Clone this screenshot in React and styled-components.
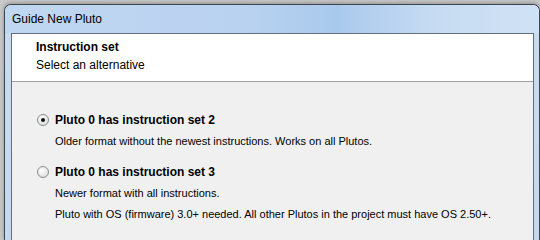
import React, { useState } from "react";
import styled, { createGlobalStyle } from "styled-components";

const GlobalStyle = createGlobalStyle`
  html, body {
    margin: 0;
    padding: 0;
    height: 100%;
    background: #c9c9c9;
    overflow: hidden;
  }
`;

const Window = styled.div`
  box-sizing: border-box;
  width: 536px;
  height: calc(100vh - 4px);
  margin: 4px 0 0 4px;
  border: 1px solid #3c4650;
  border-bottom: none;
  border-radius: 7px 7px 0 0;
  background: #c4d8ef;
  box-shadow: 0 -1px 4px rgba(0, 0, 0, 0.3);
  display: flex;
  flex-direction: column;
  font-family: "Liberation Sans", Arial, sans-serif;
`;

const TitleBar = styled.div`
  height: 28px;
  flex-shrink: 0;
  display: flex;
  align-items: center;
  padding: 0 0 0 7px;
  border-radius: 6px 6px 0 0;
  background: linear-gradient(
    90deg,
    #c0d7f1 0%,
    #b9d2f0 45%,
    #a9c9ec 62%,
    #c6dbf2 80%,
    #d0e2f5 100%
  );
  font-size: 12px;
  color: #000;
`;

const Frame = styled.div`
  flex: 1;
  min-height: 0;
  display: flex;
  padding: 0 5px 0 6px;
  background: linear-gradient(180deg, #c8dbf1 0%, #c4d8ef 100%);
`;

const Panel = styled.div`
  flex: 1;
  display: flex;
  flex-direction: column;
  overflow: hidden;
  border: 1px solid #646f7b;
  border-bottom: none;
  background: #f0f0f0;
`;

const Header = styled.div`
  box-sizing: border-box;
  flex-shrink: 0;
  height: 48px;
  padding: 4px 0 0 24px;
  background: #ffffff;
  border-bottom: 1px solid #a0a0a0;
`;

const HeaderTitle = styled.div`
  font-size: 12px;
  font-weight: bold;
  line-height: 18px;
  color: #000;
`;

const HeaderSub = styled.div`
  font-size: 12px;
  line-height: 18px;
  color: #000;
`;

const Body = styled.div`
  padding: 30px 0 0 25px;
  display: flex;
  flex-direction: column;
`;

const Option = styled.div`
  display: flex;
  flex-direction: column;
  & + & {
    margin-top: 15px;
  }
`;

const OptionRow = styled.label`
  display: flex;
  align-items: center;
  gap: 6px;
  height: 16px;
  cursor: default;
`;

const Radio = styled.span`
  box-sizing: border-box;
  width: 12px;
  height: 12px;
  border-radius: 50%;
  border: 1px solid #8a8d90;
  background: radial-gradient(circle at 40% 35%, #ffffff 0%, #e6e6e6 60%, #cfd2d4 100%);
  display: flex;
  align-items: center;
  justify-content: center;

  &::after {
    content: "";
    width: 4px;
    height: 4px;
    border-radius: 50%;
    background: ${(p) => (p.$checked ? "#111" : "transparent")};
  }
`;

const OptionLabel = styled.span`
  font-size: 12px;
  font-weight: bold;
  color: #000;
`;

const Description = styled.div`
  margin: 5px 0 0 18px;
  font-size: 11px;
  line-height: 16px;
  color: #000;

  & + & {
    margin-top: 5px;
  }
`;

const options = [
  {
    id: 2,
    label: "Pluto 0 has instruction set 2",
    lines: ["Older format without the newest instructions. Works on all Plutos."],
  },
  {
    id: 3,
    label: "Pluto 0 has instruction set 3",
    lines: [
      "Newer format with all instructions.",
      "Pluto with OS (firmware) 3.0+ needed. All other Plutos in the project must have OS 2.50+.",
    ],
  },
];

const App = () => {
  const [selected, setSelected] = useState(2);

  return (
    <>
      <GlobalStyle />
      <Window>
        <TitleBar>Guide New Pluto</TitleBar>
        <Frame>
          <Panel>
            <Header>
              <HeaderTitle>Instruction set</HeaderTitle>
              <HeaderSub>Select an alternative</HeaderSub>
            </Header>
            <Body>
              {options.map((opt) => (
                <Option key={opt.id}>
                  <OptionRow onClick={() => setSelected(opt.id)}>
                    <Radio $checked={selected === opt.id} />
                    <OptionLabel>{opt.label}</OptionLabel>
                  </OptionRow>
                  {opt.lines.map((line) => (
                    <Description key={line}>{line}</Description>
                  ))}
                </Option>
              ))}
            </Body>
          </Panel>
        </Frame>
      </Window>
    </>
  );
};

export default App;
